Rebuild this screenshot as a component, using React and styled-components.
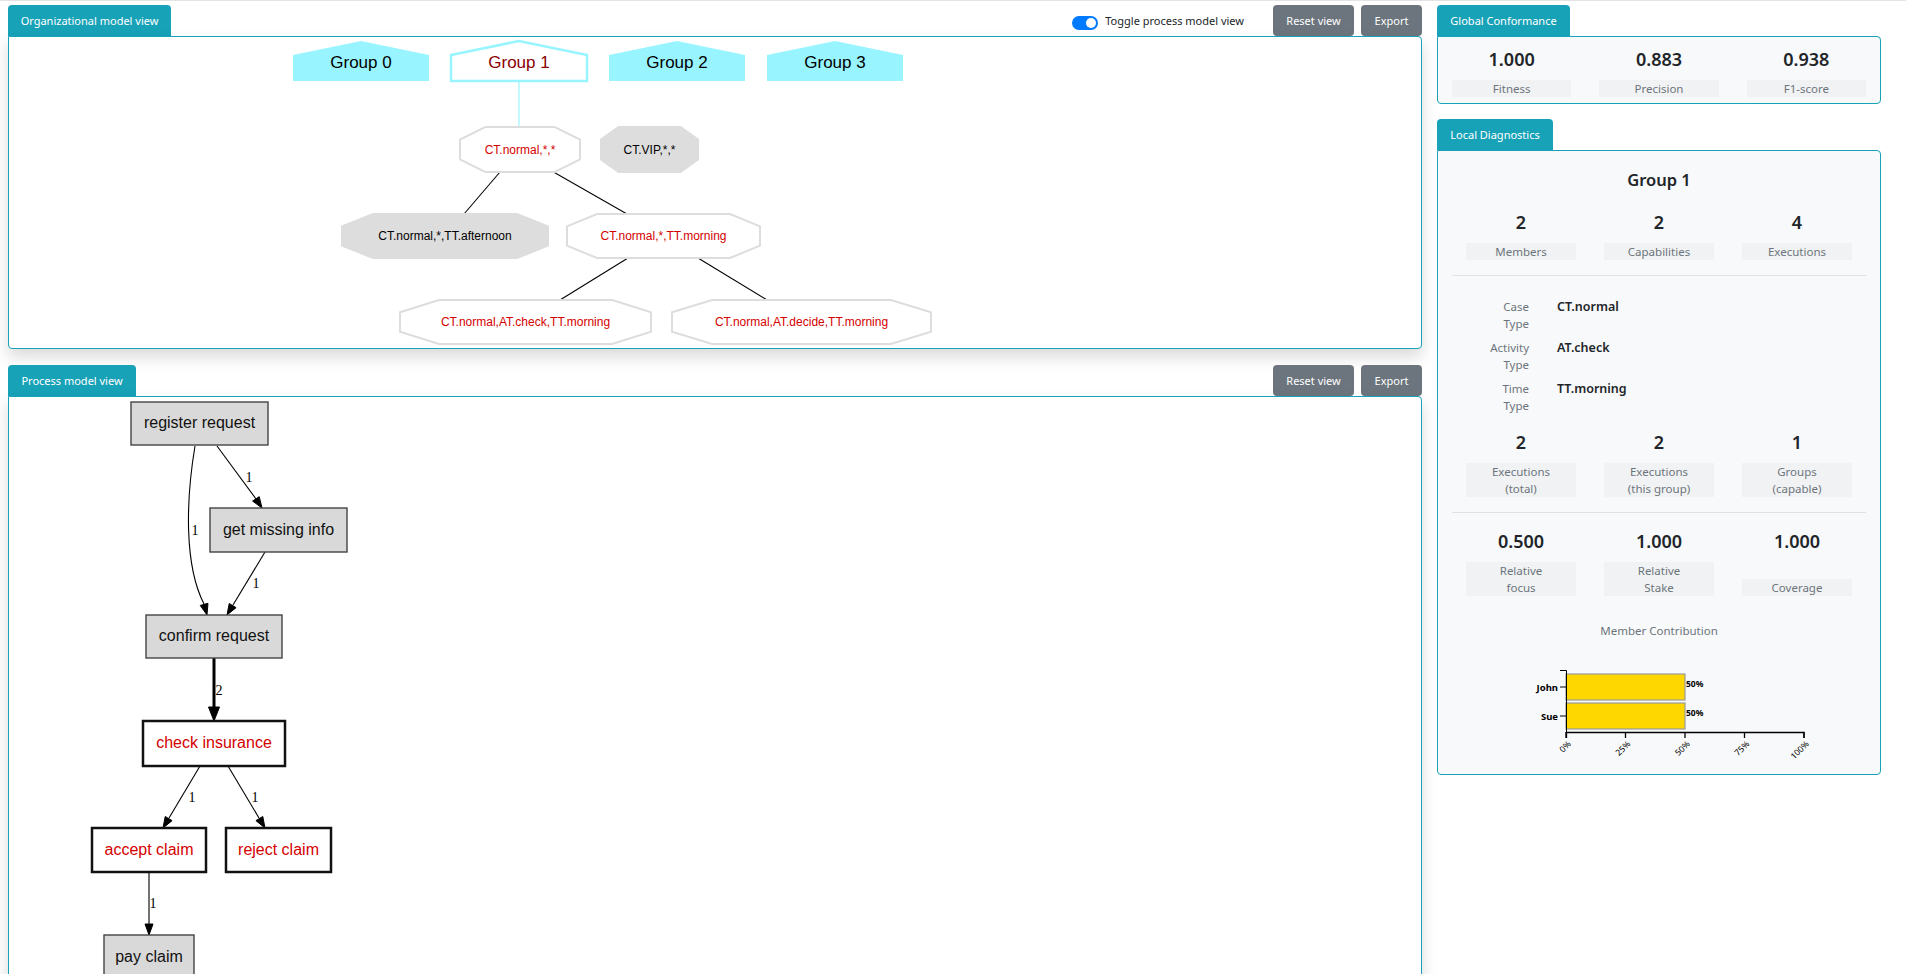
import React from 'react';
import styled, { createGlobalStyle } from 'styled-components';

const GlobalStyle = createGlobalStyle`
  html, body {
    margin: 0;
    padding: 0;
    height: 100%;
    overflow: hidden;
    background: #fff;
  }
  body {
    font-family: "Noto Sans", "Open Sans", sans-serif;
    color: #212529;
  }
`;

// layout
const Page = styled.div`
  display: flex;
  height: 974px;
  box-sizing: border-box;
  border-top: 1px solid #e3e3e3;
  padding: 4px 0 0 8px;
  gap: 15px;
  overflow: hidden;
`;

const LeftColumn = styled.div`
  width: 1414px;
  display: flex;
  flex-direction: column;
`;

const RightColumn = styled.div`
  width: 444px;
  display: flex;
  flex-direction: column;
`;

const Gutter = styled.div`
  flex: 1;
`;

const ScrollTrack = styled.div`
  width: 3px;
  background: #f0f0f0;
  padding-top: 118px;
`;

const ScrollThumb = styled.div`
  height: 838px;
  background: #c4c4c4;
`;

const Header = styled.div`
  display: flex;
  align-items: flex-end;
  height: 31px;
  flex-shrink: 0;
  margin-top: ${p => p.$top || 0}px;
`;

const Tab = styled.div`
  width: ${p => p.$w}px;
  height: 31px;
  box-sizing: border-box;
  background: #17a2b8;
  color: #fff;
  font-size: 11px;
  border-radius: 4px 4px 0 0;
  display: flex;
  align-items: center;
  justify-content: center;
  white-space: nowrap;
`;

const Spacer = styled.div`
  flex: 1;
`;

const ToggleWrap = styled.label`
  display: flex;
  align-items: center;
  gap: 7px;
  align-self: center;
  margin-right: 29px;
  font-size: 11px;
  color: #212529;
`;

const Track = styled.span`
  width: 26px;
  height: 14px;
  border-radius: 7px;
  background: #007bff;
  display: flex;
  align-items: center;
  justify-content: flex-end;
  padding: 0 2px;
  box-sizing: border-box;
  margin-top: 4px;
`;

const Knob = styled.span`
  width: 10px;
  height: 10px;
  border-radius: 50%;
  background: #fff;
`;

const Button = styled.button`
  height: 31px;
  width: ${p => p.$w}px;
  border: none;
  border-radius: 4px;
  background: #6c757d;
  color: #fff;
  font-family: inherit;
  font-size: 11px;
  margin-left: ${p => p.$gap || 0}px;
  padding: 0;
  cursor: pointer;
`;

const Panel = styled.div`
  border: 1px solid #17a2b8;
  border-radius: 0 4px 4px 4px;
  background: #fff;
  box-shadow: 0 8px 16px rgba(0, 0, 0, 0.15);
  height: ${p => (p.$h ? `${p.$h}px` : 'auto')};
  flex: ${p => (p.$grow ? 1 : 'none')};
  min-height: ${p => (p.$grow ? '700px' : 'auto')};
  box-sizing: border-box;
  overflow: hidden;
`;

const Canvas = styled.svg`
  display: block;
  overflow: visible;
`;

const Card = styled.div`
  border: 1px solid #17a2b8;
  border-radius: 0 4px 4px 4px;
  background: #f8f9fa;
  padding: ${p => p.$pad};
`;

const StatGrid = styled.div`
  display: grid;
  grid-template-columns: repeat(3, 1fr);
`;

const Stat = styled.div`
  padding: 0 ${p => p.$px}px;
  display: flex;
  flex-direction: column;
  text-align: center;
`;

const StatValue = styled.div`
  font-size: 18px;
  font-weight: 600;
  line-height: 22px;
  margin-bottom: 10px;
`;

const StatLabel = styled.div`
  margin-top: auto;
  background: #f1f2f3;
  color: #6c757d;
  font-size: 11.5px;
  line-height: 17px;
`;

const CardTitle = styled.div`
  text-align: center;
  font-size: 16.5px;
  font-weight: 600;
  line-height: 22px;
  margin-bottom: 20px;
`;

const Divider = styled.div`
  height: 1px;
  background: #dee2e6;
  margin: 15px 0 0;
`;

const TypeList = styled.div`
  display: flex;
  flex-direction: column;
  gap: 7px;
  margin-top: 22px;
`;

const TypeRow = styled.div`
  display: grid;
  grid-template-columns: 77px 1fr;
  column-gap: 28px;
`;

const TypeLabel = styled.div`
  text-align: right;
  padding-left: 32px;
  color: #6c757d;
  font-size: 11.5px;
  line-height: 17px;
`;

const TypeValue = styled.div`
  font-size: 12.5px;
  font-weight: 600;
  line-height: 17px;
`;

const Section = styled.div`
  margin-top: ${p => p.$top}px;
`;

const ChartTitle = styled.div`
  margin-top: 26px;
  text-align: center;
  color: #6c757d;
  font-size: 11.5px;
  line-height: 17px;
`;

// organizational model drawing
const CYAN = '#98f5ff';
const RED = '#d40000';

const groups = [
  { label: 'Group 0', x1: 293, x2: 429 },
  { label: 'Group 1', x1: 451, x2: 587, active: true },
  { label: 'Group 2', x1: 609, x2: 745 },
  { label: 'Group 3', x1: 767, x2: 903 },
];

const octagons = [
  { label: 'CT.normal,*,*', x1: 460, x2: 580, y1: 127, y2: 172, f: 0.21, on: true },
  { label: 'CT.VIP,*,*', x1: 601, x2: 698, y1: 127, y2: 172, f: 0.18 },
  { label: 'CT.normal,*,TT.afternoon', x1: 342, x2: 548, y1: 214, y2: 258, f: 0.15 },
  { label: 'CT.normal,*,TT.morning', x1: 567, x2: 760, y1: 214, y2: 258, f: 0.155, on: true },
  { label: 'CT.normal,AT.check,TT.morning', x1: 400, x2: 651, y1: 300, y2: 344, f: 0.155, on: true },
  { label: 'CT.normal,AT.decide,TT.morning', x1: 672, x2: 931, y1: 300, y2: 344, f: 0.155, on: true },
];

const orgLines = [
  [500, 172, 464, 214],
  [550, 170, 627, 214],
  [628, 258, 560, 300],
  [698, 258, 767, 300],
];

const octPoints = ({ x1, x2, y1, y2, f }) => {
  const dx = (x2 - x1) * f;
  const h = y2 - y1;
  const t = y1 + h * 0.28;
  const b = y1 + h * 0.72;
  return `${x1 + dx},${y1} ${x2 - dx},${y1} ${x2},${t} ${x2},${b} ${x2 - dx},${y2} ${x1 + dx},${y2} ${x1},${b} ${x1},${t}`;
};

const OrgModel = () => (
  <Canvas width="1412" height="311" viewBox="9 37 1412 311">
    <line x1="519" y1="81" x2="519" y2="127" stroke={CYAN} strokeWidth="1.2" />
    {groups.map(g => {
      const cx = (g.x1 + g.x2) / 2;
      return (
        <g key={g.label}>
          <polygon
            points={`${g.x1},55 ${cx},41 ${g.x2},55 ${g.x2},81 ${g.x1},81`}
            fill={g.active ? '#fff' : CYAN}
            stroke={CYAN}
            strokeWidth={g.active ? 2.5 : 0}
          />
          <text x={cx} y="62" textAnchor="middle" dominantBaseline="central"
            fontFamily="'Liberation Sans', Arial, sans-serif" fontSize="17"
            fill={g.active ? '#8b0000' : '#000'}>{g.label}</text>
        </g>
      );
    })}
    {orgLines.map(([a, b, c, d], i) => (
      <line key={i} x1={a} y1={b} x2={c} y2={d} stroke="#000" strokeWidth="1.1" />
    ))}
    {octagons.map(o => (
      <g key={o.label}>
        <polygon points={octPoints(o)} fill={o.on ? '#fff' : '#dddddd'}
          stroke="#dddddd" strokeWidth="2" />
        <text x={(o.x1 + o.x2) / 2} y={(o.y1 + o.y2) / 2} textAnchor="middle"
          dominantBaseline="central" fontFamily="'Liberation Sans', Arial, sans-serif"
          fontSize="12" fill={o.on ? RED : '#000'}>{o.label}</text>
      </g>
    ))}
  </Canvas>
);

// process model drawing
const nodes = [
  { label: 'register request', x1: 131, x2: 268, y1: 402, y2: 445 },
  { label: 'get missing info', x1: 210, x2: 347, y1: 508, y2: 552 },
  { label: 'confirm request', x1: 146, x2: 282, y1: 615, y2: 658 },
  { label: 'check insurance', x1: 143, x2: 285, y1: 721, y2: 766, hot: true },
  { label: 'accept claim', x1: 92, x2: 206, y1: 828, y2: 872, hot: true },
  { label: 'reject claim', x1: 226, x2: 331, y1: 828, y2: 872, hot: true },
  { label: 'pay claim', x1: 104, x2: 194, y1: 935, y2: 980 },
];

const edges = [
  { d: 'M195,446 C186,500 184,565 204,604', tip: [207, 615], from: [204, 604], label: [195, 530] },
  { d: 'M217,446 L256,499', tip: [262, 508], from: [256, 499], label: [249, 477] },
  { d: 'M265,552 L233,605', tip: [227, 615], from: [233, 605], label: [256, 583] },
  { d: 'M214,658 L214,707', tip: [214, 721], from: [214, 707], label: [219, 690], text: '2', thick: true },
  { d: 'M200,766 L169,818', tip: [163, 828], from: [169, 818], label: [192, 797] },
  { d: 'M228,766 L259,818', tip: [265, 828], from: [259, 818], label: [255, 797] },
  { d: 'M149,872 L149,924', tip: [149, 935], from: [149, 924], label: [153, 903] },
];

const arrowHead = ([tx, ty], [fx, fy], len, half) => {
  const vx = tx - fx;
  const vy = ty - fy;
  const n = Math.hypot(vx, vy);
  const ux = vx / n;
  const uy = vy / n;
  const bx = tx - ux * len;
  const by = ty - uy * len;
  return `${tx},${ty} ${bx - uy * half},${by + ux * half} ${bx + uy * half},${by - ux * half}`;
};

const ProcessModel = () => (
  <Canvas width="600" height="600" viewBox="9 397 600 600">
    {edges.map((e, i) => (
      <g key={i}>
        <path d={e.d} fill="none" stroke="#000" strokeWidth={e.thick ? 3 : 1.1} />
        <polygon points={arrowHead(e.tip, e.from, e.thick ? 14 : 11, e.thick ? 5.5 : 4)}
          fill="#000" stroke="#000" strokeWidth="1" />
        <text x={e.label[0]} y={e.label[1]} textAnchor="middle" dominantBaseline="central"
          fontFamily="'Liberation Serif', 'Times New Roman', serif" fontSize="14"
          fill="#000">{e.text || '1'}</text>
      </g>
    ))}
    {nodes.map(n => (
      <g key={n.label}>
        <rect x={n.x1} y={n.y1} width={n.x2 - n.x1} height={n.y2 - n.y1}
          fill={n.hot ? '#fff' : '#d9d9d9'} stroke={n.hot ? '#111' : '#444'}
          strokeWidth={n.hot ? 2.5 : 1.4} />
        <text x={(n.x1 + n.x2) / 2} y={(n.y1 + n.y2) / 2 - 1} textAnchor="middle"
          dominantBaseline="central" fontFamily="'Liberation Sans', Arial, sans-serif"
          fontSize="16" fill={n.hot ? RED : '#111'}>{n.label}</text>
      </g>
    ))}
  </Canvas>
);

// member contribution chart
const members = [
  { name: 'John', share: 0.5, y: 675 },
  { name: 'Sue', share: 0.5, y: 704 },
];
const AX0 = 1565;
const AXW = 238;
const AXY = 733;

const ContributionChart = () => (
  <Canvas width="416" height="123" viewBox="1451 640 416 123">
    {members.map(m => (
      <g key={m.name}>
        <rect x={AX0} y={m.y} width={AXW * m.share} height="26" fill="#ffd700"
          stroke="#9a9a9a" strokeWidth="1.2" />
        <line x1={AX0 - 6} y1={m.y + 13} x2={AX0} y2={m.y + 13} stroke="#000" />
        <text x={AX0 - 8} y={m.y + 13} textAnchor="end" dominantBaseline="central"
          fontSize="9.5" fontWeight="700" fontFamily="'Noto Sans', sans-serif">{m.name}</text>
        <text x={AX0 + AXW * m.share + 1} y={m.y + 9} dominantBaseline="central"
          fontSize="8.5" fontWeight="700" fontFamily="'Noto Sans', sans-serif">50%</text>
      </g>
    ))}
    <path d={`M${AX0 - 6},671.5 H${AX0 + 0.5} V${AXY}`} fill="none" stroke="#000" />
    <path d={`M${AX0 + 0.5},${AXY + 6} V${AXY + 0.5} H${AX0 + AXW} V${AXY + 6}`} fill="none" stroke="#000" strokeWidth="1.3" />
    {[0, 25, 50, 75, 100].map(p => {
      const x = AX0 + (AXW * p) / 100;
      return (
        <g key={p}>
          <line x1={x} y1={AXY} x2={x} y2={AXY + 6} stroke="#000" strokeWidth="1.3" />
          <text x={x + 3} y={AXY + 10} textAnchor="end" dominantBaseline="central"
            transform={`rotate(-45 ${x + 3} ${AXY + 10})`} fontSize="8.5"
            fontFamily="'Noto Sans', sans-serif" fill="#000">{p}%</text>
        </g>
      );
    })}
  </Canvas>
);

const globalStats = [
  { value: '1.000', label: 'Fitness' },
  { value: '0.883', label: 'Precision' },
  { value: '0.938', label: 'F1-score' },
];

const groupStats = [
  [
    { value: '2', label: ['Members'] },
    { value: '2', label: ['Capabilities'] },
    { value: '4', label: ['Executions'] },
  ],
  [
    { value: '2', label: ['Executions', '(total)'] },
    { value: '2', label: ['Executions', '(this group)'] },
    { value: '1', label: ['Groups', '(capable)'] },
  ],
  [
    { value: '0.500', label: ['Relative', 'focus'] },
    { value: '1.000', label: ['Relative', 'Stake'] },
    { value: '1.000', label: ['Coverage'] },
  ],
];

const types = [
  { label: 'Case Type', value: 'CT.normal' },
  { label: 'Activity Type', value: 'AT.check' },
  { label: 'Time Type', value: 'TT.morning' },
];

const StatRow = ({ items }) => (
  <StatGrid>
    {items.map((s, i) => (
      <Stat key={i} $px={14}>
        <StatValue>{s.value}</StatValue>
        <StatLabel>
          {s.label.map((l, j) => <div key={j}>{l}</div>)}
        </StatLabel>
      </Stat>
    ))}
  </StatGrid>
);

const App = () => (
  <>
    <GlobalStyle />
    <Page>
      <LeftColumn>
        <Header>
          <Tab $w={163}>Organizational model view</Tab>
          <Spacer />
          <ToggleWrap>
            <Track><Knob /></Track>
            Toggle process model view
          </ToggleWrap>
          <Button $w={81}>Reset view</Button>
          <Button $w={61} $gap={7}>Export</Button>
        </Header>
        <Panel $h={313}>
          <OrgModel />
        </Panel>
        <Header $top={16}>
          <Tab $w={128}>Process model view</Tab>
          <Spacer />
          <Button $w={81}>Reset view</Button>
          <Button $w={61} $gap={7}>Export</Button>
        </Header>
        <Panel $grow>
          <ProcessModel />
        </Panel>
      </LeftColumn>

      <RightColumn>
        <Header>
          <Tab $w={133}>Global Conformance</Tab>
        </Header>
        <Card $pad="11px 0 6px">
          <StatGrid>
            {globalStats.map(s => (
              <Stat key={s.label} $px={14}>
                <StatValue>{s.value}</StatValue>
                <StatLabel>{s.label}</StatLabel>
              </Stat>
            ))}
          </StatGrid>
        </Card>
        <Header $top={15}>
          <Tab $w={116}>Local Diagnostics</Tab>
        </Header>
        <Card $pad="18px 14px 12px">
          <CardTitle>Group 1</CardTitle>
          <StatRow items={groupStats[0]} />
          <Divider />
          <TypeList>
            {types.map(t => (
              <TypeRow key={t.label}>
                <TypeLabel>{t.label}</TypeLabel>
                <TypeValue>{t.value}</TypeValue>
              </TypeRow>
            ))}
          </TypeList>
          <Section $top={17}>
            <StatRow items={groupStats[1]} />
          </Section>
          <Divider />
          <Section $top={17}>
            <StatRow items={groupStats[2]} />
          </Section>
          <ChartTitle>Member Contribution</ChartTitle>
          <ContributionChart />
        </Card>
      </RightColumn>
      <Gutter />
      <ScrollTrack>
        <ScrollThumb />
      </ScrollTrack>
    </Page>
  </>
);

export default App;
